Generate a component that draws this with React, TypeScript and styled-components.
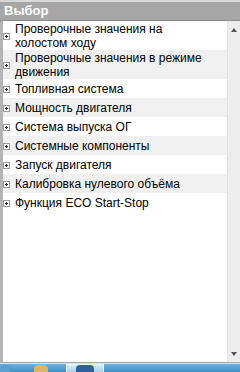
import React from 'react';
import styled, {createGlobalStyle} from 'styled-components';

const GlobalStyle = createGlobalStyle`
  html, body {
    margin: 0;
    padding: 0;
    width: 240px;
    height: 372px;
    overflow: hidden;
    background: #ffffff;
  }
  #root {
    width: 240px;
    height: 372px;
  }
`

const Screen = styled.div`
  width: 240px;
  height: 372px;
  display: flex;
  flex-direction: column;
  font-family: "Liberation Sans", Arial, sans-serif;
`

const TopStrip = styled.div`
  height: 2px;
  background: #d8d8d8;
`

const Header = styled.div`
  height: 18px;
  background: #a6a6a6;
  border-bottom: 1px solid #8c8c8c;
  color: #ffffff;
  font-weight: bold;
  font-size: 13px;
  line-height: 18px;
  padding-left: 4px;
`

const Body = styled.div`
  flex: 1;
  display: flex;
  border-left: 3px solid #b4b4b4;
  border-bottom: 1px solid #a8a8a8;
  min-height: 0;
`

const List = styled.div`
  flex: 1;
  display: flex;
  flex-direction: column;
  background: #ffffff;
`

const Row = styled.div<{$shade: boolean; $tall?: boolean}>`
  display: flex;
  align-items: center;
  background: ${p => p.$shade ? '#f0f0f0' : '#ffffff'};
  min-height: ${p => p.$tall ? 29 : 19}px;
  padding-right: 14px;
`

const Expander = styled.span`
  flex: none;
  width: 7px;
  height: 7px;
  margin: 2px 5px 0 0;
  border: 1px solid #9a9a9a;
  background: #fafafa;
  position: relative;
  box-sizing: border-box;

  &::before, &::after {
    content: '';
    position: absolute;
    background: #222;
  }
  &::before {
    left: 1px;
    top: 2px;
    width: 3px;
    height: 1px;
  }
  &::after {
    left: 2px;
    top: 1px;
    width: 1px;
    height: 3px;
  }
`

const Label = styled.span`
  font-size: 12px;
  line-height: 14px;
  color: #000000;
`

const Scrollbar = styled.div`
  width: 12px;
  flex: none;
  background: #ededed;
  border-left: 1px solid #e2e2e2;
  display: flex;
  flex-direction: column;
  justify-content: space-between;
  align-items: center;
  padding: 7px 0 6px;
`

const Arrow = styled.svg`
  width: 6px;
  height: 4px;
`

const Taskbar = styled.div`
  height: 8px;
  background: linear-gradient(#6fb1da, #3d8fc6);
  border-top: 1px solid #cfe4f2;
  display: flex;
  align-items: flex-end;
`

const TaskIcon = styled.div<{$w: number; $c: string}>`
  width: ${p => p.$w}px;
  height: 7px;
  background: ${p => p.$c};
  border-radius: 4px 4px 0 0;
`

const TaskButton = styled.div`
  width: 38px;
  height: 8px;
  margin-left: 18px;
  background: linear-gradient(#d9ecf8, #a9d0ec);
  border: 1px solid #e8f3fb;
  border-bottom: none;
  box-sizing: border-box;
  display: flex;
  justify-content: center;
  align-items: flex-end;
`

const items = [
  'Проверочные значения на холостом ходу',
  'Проверочные значения в режиме движения',
  'Топливная система',
  'Мощность двигателя',
  'Система выпуска ОГ',
  'Системные компоненты',
  'Запуск двигателя',
  'Калибровка нулевого объёма',
  'Функция ECO Start-Stop',
];

const App: React.FC = () => {
  return (
    <Screen>
      <GlobalStyle />
      <TopStrip />
      <Header>Выбор</Header>
      <Body>
        <List>
          {items.map((text, i) =>
            <Row key={i} $shade={i % 2 === 1} $tall={i < 2}>
              <Expander />
              <Label>{text}</Label>
            </Row>
          )}
        </List>
        <Scrollbar>
          <Arrow viewBox="0 0 6 4"><path d="M3 0 L6 4 L0 4 Z" fill="#555" /></Arrow>
          <Arrow viewBox="0 0 6 4"><path d="M0 0 L6 0 L3 4 Z" fill="#555" /></Arrow>
        </Scrollbar>
      </Body>
      <Taskbar>
        <TaskIcon $w={10} $c="#5a9fd0" />
        <TaskIcon $w={24} $c="transparent" />
        <TaskIcon $w={14} $c="#d9b46a" />
        <TaskButton>
          <TaskIcon $w={18} $c="#2f5f9e" />
        </TaskButton>
      </Taskbar>
    </Screen>
  );
}

export default App;
